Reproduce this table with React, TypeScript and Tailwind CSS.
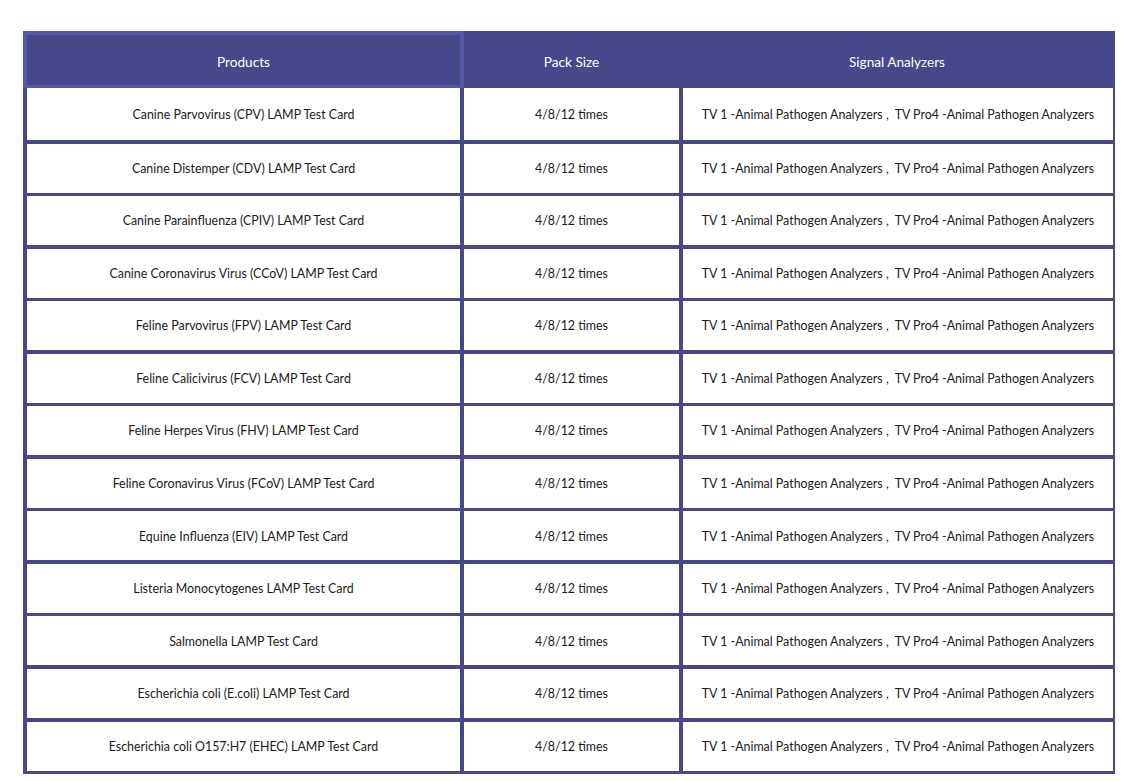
import React from 'react';

// product rows, pack size and analyzers are the same on every line
const products: string[] = [
  'Canine Parvovirus (CPV) LAMP Test Card',
  'Canine Distemper (CDV) LAMP Test Card',
  'Canine Parainfluenza (CPIV) LAMP Test Card',
  'Canine Coronavirus Virus (CCoV) LAMP Test Card',
  'Feline Parvovirus (FPV) LAMP Test Card',
  'Feline Calicivirus (FCV) LAMP Test Card',
  'Feline Herpes Virus (FHV) LAMP Test Card',
  'Feline Coronavirus Virus (FCoV) LAMP Test Card',
  'Equine Influenza (EIV) LAMP Test Card',
  'Listeria Monocytogenes LAMP Test Card',
  'Salmonella LAMP Test Card',
  'Escherichia coli (E.coli) LAMP Test Card',
  'Escherichia coli O157:H7 (EHEC) LAMP Test Card',
];

const packSize = '4/8/12 times';
const analyzers = 'TV 1 -Animal Pathogen Analyzers ,\u00a0 TV Pro4 -Animal Pathogen Analyzers';

const App: React.FC = () => {
  return (
    <div className="min-h-screen bg-white pt-[31px] pl-[23px] font-['Lato',sans-serif] text-[12.4px] text-[#1a1a1a]">
      <div className="w-[1092px] bg-[#48478a]">
        {/* header */}
        <div className="grid h-[57px] grid-cols-[441px_218px_1fr] text-[13.6px] text-white">
          <div className="flex items-center justify-center border-[4px] border-b-[3px] border-[#5558a6] pt-[5px]">
            Products
          </div>
          <div className="flex items-center justify-center pt-[5px] pr-[3px]">Pack Size</div>
          <div className="flex items-center justify-center pt-[5px] pr-[3px]">Signal Analyzers</div>
        </div>

        {/* body */}
        <div className="grid grid-cols-[433px_215px_430px] grid-rows-[52px_repeat(12,49px)] gap-x-[4px] gap-y-[3.55px] pl-[4px] pr-[3px] pb-[3px]">
          {products.map((name) => (
            <React.Fragment key={name}>
              <div className="flex items-center justify-center bg-white pt-[2px]">{name}</div>
              <div className="flex items-center justify-center bg-white pt-[2px]">{packSize}</div>
              <div className="flex items-center justify-center whitespace-pre bg-white pt-[2px]">{analyzers}</div>
            </React.Fragment>
          ))}
        </div>
      </div>
    </div>
  );
};

export default App;
